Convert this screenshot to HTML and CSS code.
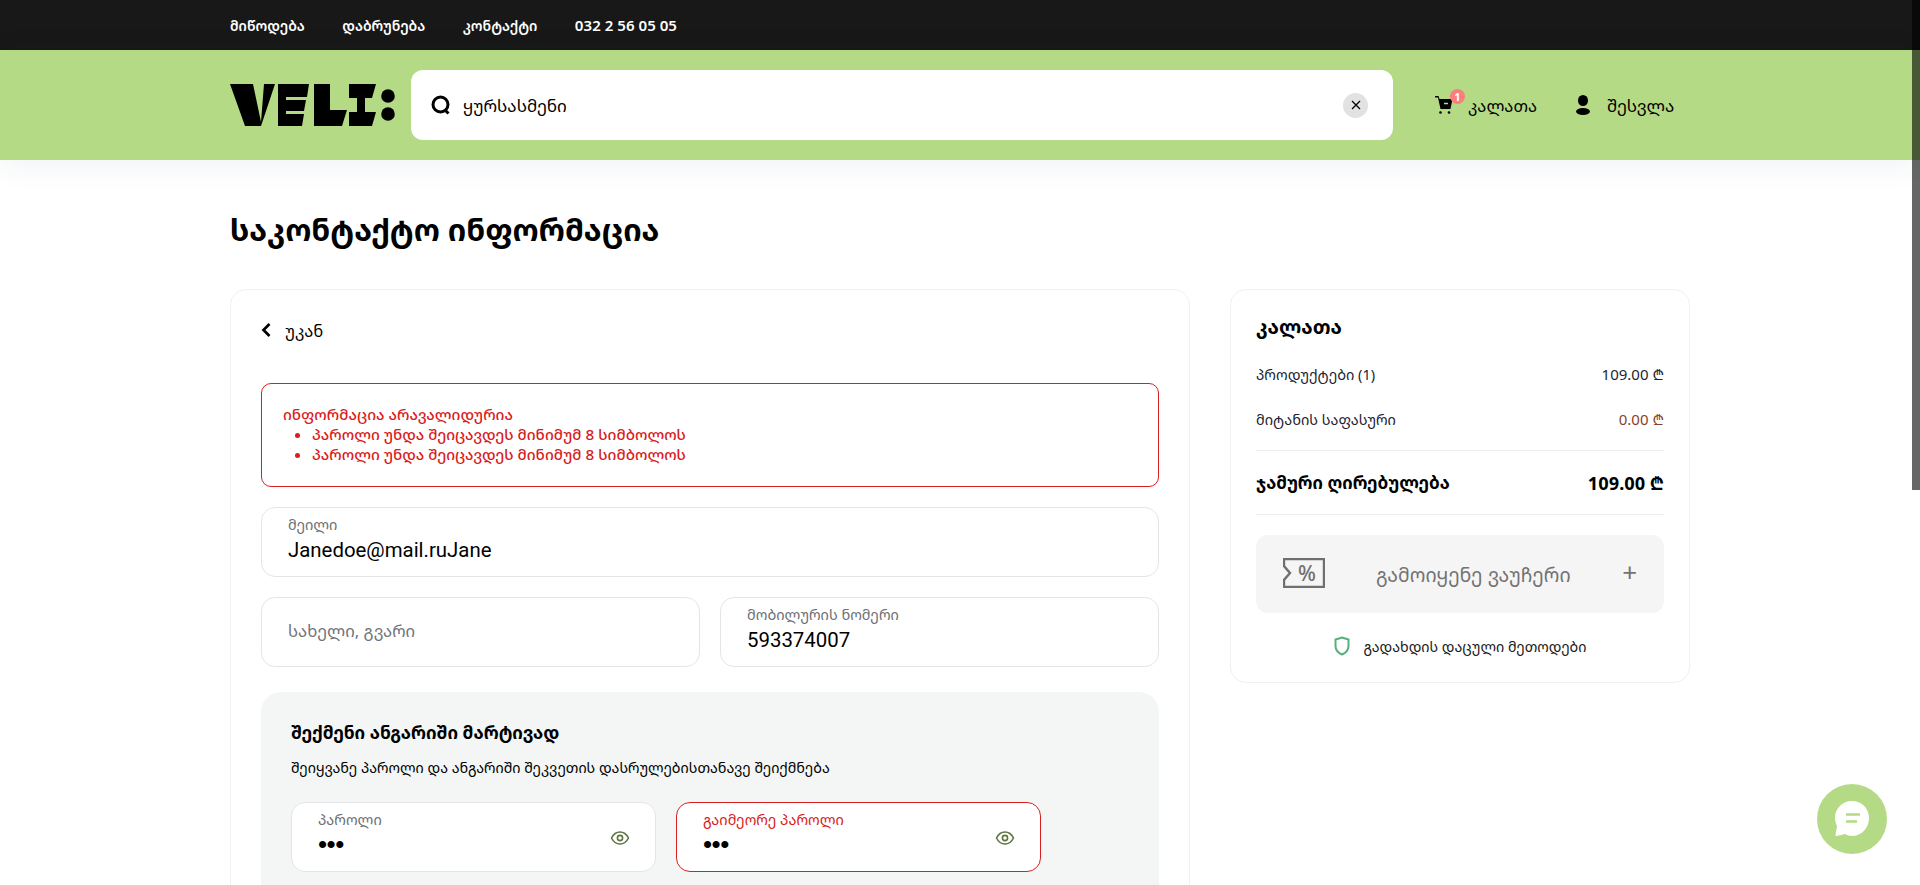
FILE: index.html
```html
<!DOCTYPE html>
<html lang="ka">
<head>
<meta charset="utf-8">
<title>საკონტაქტო ინფორმაცია</title>
<link rel="stylesheet" href="styles.css">
</head>
<body>
<div class="topbar">
  <div class="wrap topnav">
    <a>მიწოდება</a><a>დაბრუნება</a><a>კონტაქტი</a><a class="phone">032 2 56 05 05</a>
  </div>
</div>
<header class="header">
  <div class="wrap headrow">
    <svg class="logo" viewBox="0 0 166 42" role="img" aria-label="VELI">
      <path d="M0 0H23L31 38L34 0H45L31 42H15Z"/>
      <path d="M48 0H79L77 13H56V16H76L74 27H56V30H74L72 42H48Z"/>
      <path d="M84 0H100V26H117L112 42H84Z"/>
      <path d="M119 0H146L142 14H135V28H146L142 42H119V28H127V14H119Z"/>
      <circle cx="158" cy="12" r="6.800"/><circle cx="158" cy="30" r="6.800"/>
    </svg>
    <div class="search">
      <svg class="search-ic" viewBox="0 0 20 20"><circle cx="9.500" cy="9.500" r="7.500"/><path d="M13.500 14.500l4 4"/></svg>
      <span class="search-text">ყურსასმენი</span>
      <span class="clear"><svg viewBox="0 0 10 10"><path d="M1 1l8 8M9 1l-8 8"/></svg></span>
    </div>
    <a class="headlink cartlink">
      <span class="cart">
        <svg viewBox="0 0 18 18"><path d="M0 0H3.500L4.500 3H17.500L15.500 13H5.500L3 1.500H0Z"/><path d="M9 7.500h4" class="cart-dash"/><circle cx="5.500" cy="16.500" r="1.300"/><circle cx="14" cy="16.500" r="1.300"/></svg>
        <b class="badge">1</b>
      </span>
      კალათა
    </a>
    <a class="headlink userlink">
      <svg class="user" viewBox="0 0 16 20"><ellipse cx="8" cy="5.500" rx="5" ry="5.500"/><ellipse cx="8" cy="16.500" rx="7" ry="3.500"/></svg>
      შესვლა
    </a>
  </div>
</header>
<main class="wrap">
  <h1 class="title">საკონტაქტო ინფორმაცია</h1>
  <div class="columns">
    <section class="card left">
      <a class="back"><svg viewBox="0 0 10 14"><path d="M8.500 1L2.500 7 8.500 13"/></svg>უკან</a>
      <div class="alert">
        <div>ინფორმაცია არავალიდურია</div>
        <ul>
          <li>პაროლი უნდა შეიცავდეს მინიმუმ 8 სიმბოლოს</li>
          <li>პაროლი უნდა შეიცავდეს მინიმუმ 8 სიმბოლოს</li>
        </ul>
      </div>
      <div class="field">
        <label>მეილი</label>
        <div class="value">Janedoe@mail.ruJane</div>
      </div>
      <div class="row">
        <div class="field empty"><span class="placeholder">სახელი, გვარი</span></div>
        <div class="field">
          <label>მობილურის ნომერი</label>
          <div class="value">593374007</div>
        </div>
      </div>
      <div class="panel">
        <h3>შექმენი ანგარიში მარტივად</h3>
        <p>შეიყვანე პაროლი და ანგარიში შეკვეთის დასრულებისთანავე შეიქმნება</p>
        <div class="pwrow">
          <div class="field pw">
            <label>პაროლი</label>
            <div class="dots">•••</div>
            <svg class="eye" viewBox="0 0 20 20"><path d="M1.500 10C3.500 6 6.500 4 10 4s6.500 2 8.500 6c-2 4-5 6-8.500 6s-6.500-2-8.500-6z"/><circle cx="10" cy="10" r="2.600"/></svg>
          </div>
          <div class="field pw error">
            <label>გაიმეორე პაროლი</label>
            <div class="dots">•••</div>
            <svg class="eye" viewBox="0 0 20 20"><path d="M1.500 10C3.500 6 6.500 4 10 4s6.500 2 8.500 6c-2 4-5 6-8.500 6s-6.500-2-8.500-6z"/><circle cx="10" cy="10" r="2.600"/></svg>
          </div>
        </div>
      </div>
    </section>
    <aside class="card right">
      <h2>კალათა</h2>
      <div class="line"><span>პროდუქტები (1)</span><span class="num">109.00 ₾</span></div>
      <div class="line"><span>მიტანის საფასური</span><span class="num fee">0.00 ₾</span></div>
      <div class="total"><span>ჯამური ღირებულება</span><span class="sum">109.00 ₾</span></div>
      <div class="coupon">
        <svg class="ticket" viewBox="0 0 42 30"><path d="M1 1H41V29H1V22L7 15 1 8Z"/></svg>
        <span class="pct">%</span>
        <span class="coupon-text">გამოიყენე ვაუჩერი</span>
        <span class="plus">+</span>
      </div>
      <div class="secure">
        <svg viewBox="0 0 16 20"><path d="M8 1.500L14.500 3.500V10C14.500 14 11.500 17 8 18.500 4.500 17 1.500 14 1.500 10V3.500Z"/></svg>
        გადახდის დაცული მეთოდები
      </div>
    </aside>
  </div>
</main>
<button class="chat" aria-label="chat">
  <svg viewBox="0 0 40 40"><path d="M20 2C10.500 2 3 9.500 3 19c0 3 .8 5.500 2 8l-1.500 9c-.2.800.3 1.200 1 1L13 35c2.200 1.300 4.500 2 7 2 9.500 0 17-8 17-18S29.500 2 20 2z" class="bubble"/><path d="M14 15.500h14M14 22.500h11" class="bars"/></svg>
</button>
<div class="scrollbar"><div class="thumb"></div></div>
</body>
</html>
```
FILE: styles.css
```css
* { box-sizing: border-box; }
html, body { margin: 0; height: 885px; overflow: hidden; }
body { font-family: "Noto Sans Georgian", "Noto Sans", "DejaVu Sans", sans-serif; color: #000; background: #fff; position: relative; }
a { color: inherit; text-decoration: none; }
.wrap { width: 1460px; margin-left: 230px; }

.topbar { height: 50px; background: #181818; color: #fff; }
.topnav { display: flex; align-items: center; gap: 37.500px; height: 100%; font-size: 14px; font-weight: 600; }
.phone { font-size: 15px; }

.header { height: 110px; background: #b5da86; box-shadow: 0 4px 30px rgba(30, 50, 90, .07); position: relative; }
.headrow { display: flex; align-items: center; height: 100%; }
.logo { width: 166px; height: 42px; flex: none; }
.search { width: 982px; height: 70px; margin-left: 15px; background: #fff; border-radius: 12px; display: flex; align-items: center; padding: 0 20px; flex: none; }
.search-ic { width: 20px; height: 20px; fill: none; stroke: #000; stroke-width: 3; flex: none; margin-right: 12px; }
.search-text { font-size: 17px; flex: 1; }
.clear { width: 25px; height: 25px; border-radius: 50%; background: #e2e2e2; display: flex; align-items: center; justify-content: center; margin-right: 5px; }
.clear svg { width: 10px; height: 10px; fill: none; stroke: #000; stroke-width: 1.300; }
.headlink { display: flex; align-items: center; font-size: 16.500px; }
.cartlink { margin-left: 42px; }
.cart { position: relative; width: 18px; height: 18px; margin-right: 15px; }
.cart svg { width: 18px; height: 18px; display: block; }
.cart-dash { stroke: #b5da86; stroke-width: 1.500; fill: none; }
.badge { position: absolute; left: 15px; top: -7px; width: 15px; height: 15px; border-radius: 50%; background: #fd7c7c; color: #fff; font-size: 11px; font-weight: 700; line-height: 15px; text-align: center; font-family: "Noto Sans", sans-serif; }
.userlink { margin-left: 38px; font-size: 17px; }
.user { width: 16px; height: 20px; margin-right: 16px; }

.title { margin: 49px 0 0; font-size: 30.500px; line-height: 40px; font-weight: 700; height: 40px; }
.columns { display: flex; gap: 40px; margin-top: 40px; align-items: flex-start; }
.card { border: 1px solid #f0f1f3; border-radius: 16px; background: #fff; }
.left { width: 960px; height: 700px; padding: 0 30px; }
.right { width: 460px; height: 394px; padding: 0 25px; }

.back { display: flex; align-items: center; gap: 14px; font-size: 16.500px; height: 24px; margin-top: 28px; }
.back svg { width: 10px; height: 14px; fill: none; stroke: #000; stroke-width: 2.700; }
.alert { margin-top: 41px; height: 104px; border: 1px solid #d81f1f; border-radius: 10px; padding: 20px 21px; color: #d91c1c; font-size: 15.200px; font-weight: 500; line-height: 20px; }
.alert ul { margin: 0; padding-left: 29px; }

.field { position: relative; height: 70px; border: 1px solid #e4e5e8; border-radius: 14px; background: #fff; padding: 7px 26px; margin-top: 20px; flex: 1; }
.field label { display: block; font-size: 14.500px; line-height: 20px; color: #6c6f75; }
.value { font-family: Roboto, sans-serif; font-size: 20.400px; line-height: 30px; color: #000; }
.row { display: flex; gap: 20px; }
.empty { display: flex; align-items: center; padding-bottom: 11px; }
.placeholder { font-size: 16.700px; color: #70747a; }

.panel { margin-top: 25px; height: 300px; background: #f4f6f6; border-radius: 20px; padding: 27px 30px; }
.panel h3 { margin: 0; font-size: 17.500px; line-height: 26px; font-weight: 700; }
.panel p { margin: 10px 0 0; font-size: 14.300px; line-height: 26px; }
.pwrow { display: flex; gap: 20px; width: 750px; margin-top: 21px; }
.pw { margin-top: 0; }
.pw .eye { position: absolute; right: 25px; top: 25px; width: 20px; height: 20px; fill: none; stroke: #5f7440; stroke-width: 1.600; }
.dots { font-size: 26px; line-height: 26px; letter-spacing: -.5px; margin-top: 1px; color: #000; font-family: "Liberation Sans", sans-serif; }
.error { border-color: #d81f1f; }
.error label { color: #d91c1c; }

.right h2 { margin: 24px 0 0; font-size: 19.500px; line-height: 26px; font-weight: 700; }
.line { display: flex; justify-content: space-between; align-items: center; font-size: 14.500px; color: #1d2433; height: 24px; }
.num { font-size: 15px; }
.right h2 + .line { margin-top: 22px; }
.line + .line { margin-top: 21px; }
.fee { color: #8a3f2c; }
.total { display: flex; justify-content: space-between; align-items: center; height: 65px; margin-top: 19px; border-top: 1px solid #eceef0; border-bottom: 1px solid #eceef0; font-size: 17.200px; font-weight: 700; }
.sum { font-size: 18px; }
.coupon { position: relative; display: flex; align-items: center; height: 78px; margin-top: 20px; background: #f5f5f5; border-radius: 12px; color: #737373; }
.ticket { position: absolute; left: 27px; top: 23px; width: 42px; height: 30px; fill: none; stroke: #6f6f6f; stroke-width: 2.400; }
.pct { position: absolute; left: 42px; top: 25px; font-size: 21px; font-weight: 500; line-height: 26px; color: #6f6f6f; }
.coupon-text { margin-left: 120px; font-size: 19.500px; }
.plus { position: absolute; right: 27px; top: 22px; font-size: 26px; line-height: 30px; }
.secure { display: flex; align-items: center; justify-content: center; gap: 14px; margin-top: 19px; height: 28px; font-size: 14.300px; color: #1a1a1a; }
.secure svg { width: 16px; height: 20px; fill: none; stroke: #55b07e; stroke-width: 2; }

.chat { position: absolute; left: 1817px; top: 784px; width: 70px; height: 70px; border: 0; padding: 0; border-radius: 50%; background: #b5da86; display: flex; align-items: center; justify-content: center; }
.chat svg { width: 40px; height: 40px; }
.bubble { fill: #fff; }
.bars { stroke: #b5da86; stroke-width: 2.400; fill: none; }

.scrollbar { position: absolute; right: 0; top: 0; width: 8px; height: 885px; }
.thumb { height: 490px; background: rgba(0, 0, 0, .6); }
```
